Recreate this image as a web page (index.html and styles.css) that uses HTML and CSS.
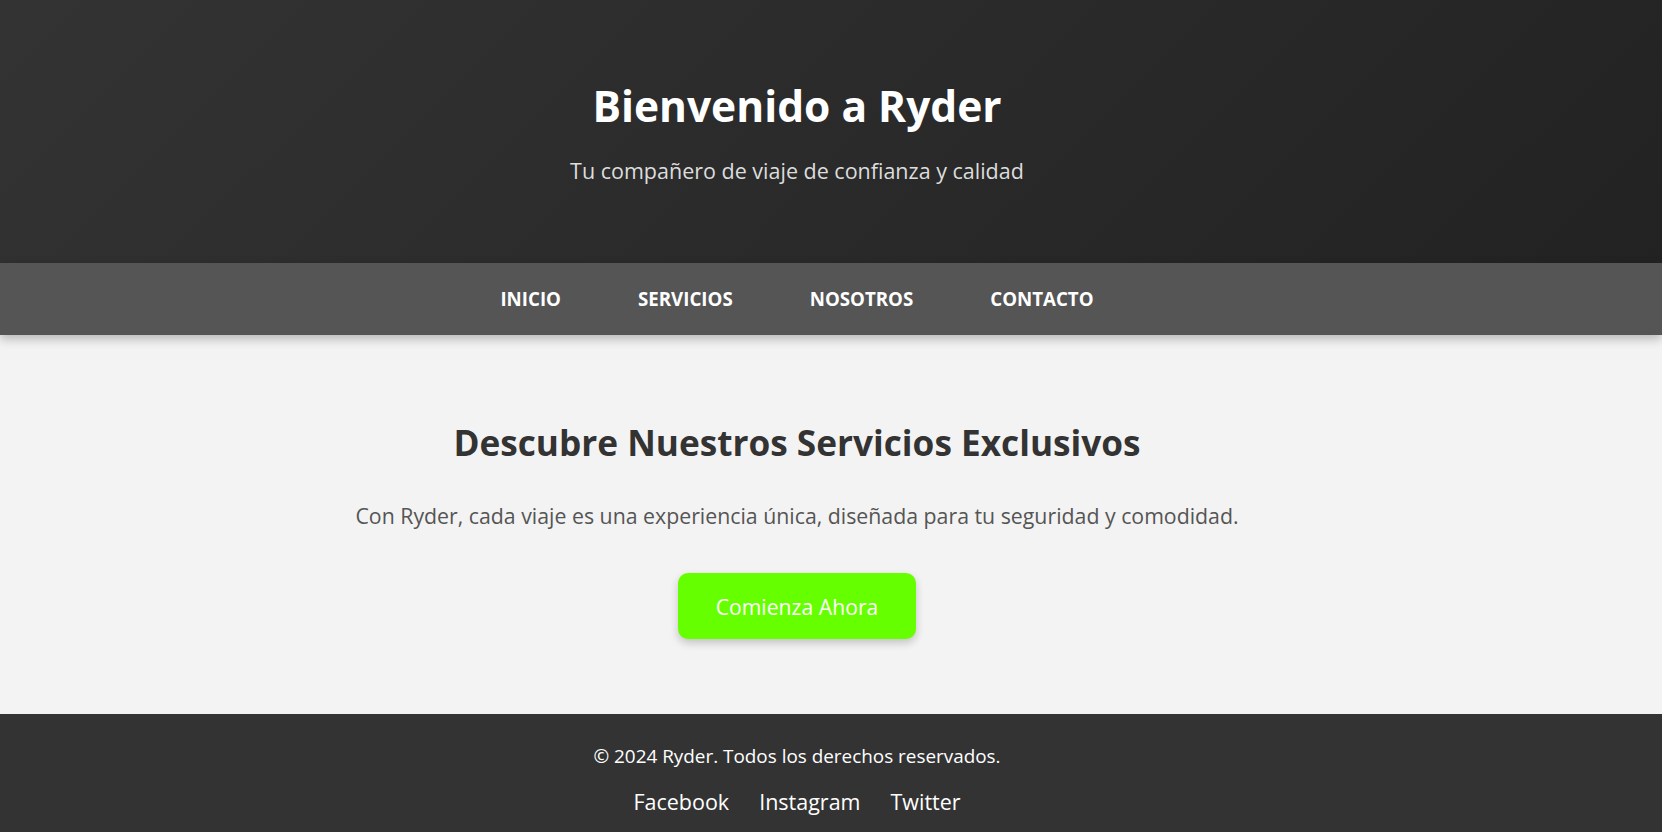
FILE: index.html
```html
<!DOCTYPE html>
<html lang="es">
<head>
<meta charset="utf-8">
<title>Ryder</title>
<link rel="stylesheet" href="styles.css">
</head>
<body>
<header class="hero">
  <h1 class="hero-title">Bienvenido a Ryder</h1>
  <p class="hero-sub">Tu compañero de viaje de confianza y calidad</p>
</header>
<nav class="nav">
  <a href="#" class="nav-link">INICIO</a>
  <a href="#" class="nav-link">SERVICIOS</a>
  <a href="#" class="nav-link">NOSOTROS</a>
  <a href="#" class="nav-link">CONTACTO</a>
</nav>
<main class="main">
  <h2 class="main-title">Descubre Nuestros Servicios Exclusivos</h2>
  <p class="main-text">Con Ryder, cada viaje es una experiencia única, diseñada para tu seguridad y comodidad.</p>
  <a href="#" class="cta">Comienza Ahora</a>
</main>
<footer class="footer">
  <p class="footer-copy">© 2024 Ryder. Todos los derechos reservados.</p>
  <div class="footer-links">
    <a href="#" class="footer-link">Facebook</a>
    <a href="#" class="footer-link">Instagram</a>
    <a href="#" class="footer-link">Twitter</a>
  </div>
</footer>
</body>
</html>
```
FILE: styles.css
```css
* { box-sizing: border-box; }
html, body { margin: 0; padding: 0; }
body {
  font-family: "Open Sans", "Noto Sans", sans-serif;
  background: #f3f3f3;
  color: #333;
}
a { text-decoration: none; }

.hero {
  background: linear-gradient(135deg, #333333 0%, #222222 100%);
  color: #fff;
  text-align: center;
  padding: 82px 88px 79px 20px;
}
.hero-title {
  margin: 0;
  font-size: 42.5px;
  line-height: 48px;
  font-weight: 700;
}
.hero-sub {
  margin: 28px 0 0;
  font-size: 21.5px;
  line-height: 26px;
  color: #dddddd;
}

.nav {
  position: relative;
  z-index: 1;
  background: #555555;
  height: 72px;
  padding-right: 68px;
  display: flex;
  justify-content: center;
  align-items: center;
  gap: 77px;
  box-shadow: 0 4px 10px rgba(0,0,0,0.25);
}
.nav-link {
  color: #fff;
  font-weight: 700;
  font-size: 18.7px;
  line-height: 24px;
}

.main {
  background: #f3f3f3;
  text-align: center;
  height: 379px;
  padding: 85px 68px 0 0;
  display: flex;
  flex-direction: column;
  align-items: center;
}
.main-title {
  margin: 0;
  font-size: 35.2px;
  line-height: 44px;
  font-weight: 700;
  color: #333;
}
.main-text {
  margin: 39px 0 0;
  font-size: 21.3px;
  line-height: 26px;
  color: #555;
}
.cta {
  margin-top: 44px;
  display: flex;
  align-items: center;
  justify-content: center;
  width: 238px;
  height: 66px;
  background: #66ff00;
  color: #fff;
  font-size: 21.2px;
  border-radius: 10px;
  box-shadow: 0 4px 8px rgba(0,0,0,0.2);
}

.footer {
  background: #333333;
  color: #fff;
  text-align: center;
  height: 118px;
  padding: 30px 68px 0 0;
}
.footer-copy {
  margin: 0;
  font-size: 18.9px;
  line-height: 24px;
}
.footer-links {
  margin-top: 20px;
  display: flex;
  justify-content: center;
  gap: 30px;
}
.footer-link {
  color: #fff;
  font-size: 21.5px;
  line-height: 28px;
}
```
